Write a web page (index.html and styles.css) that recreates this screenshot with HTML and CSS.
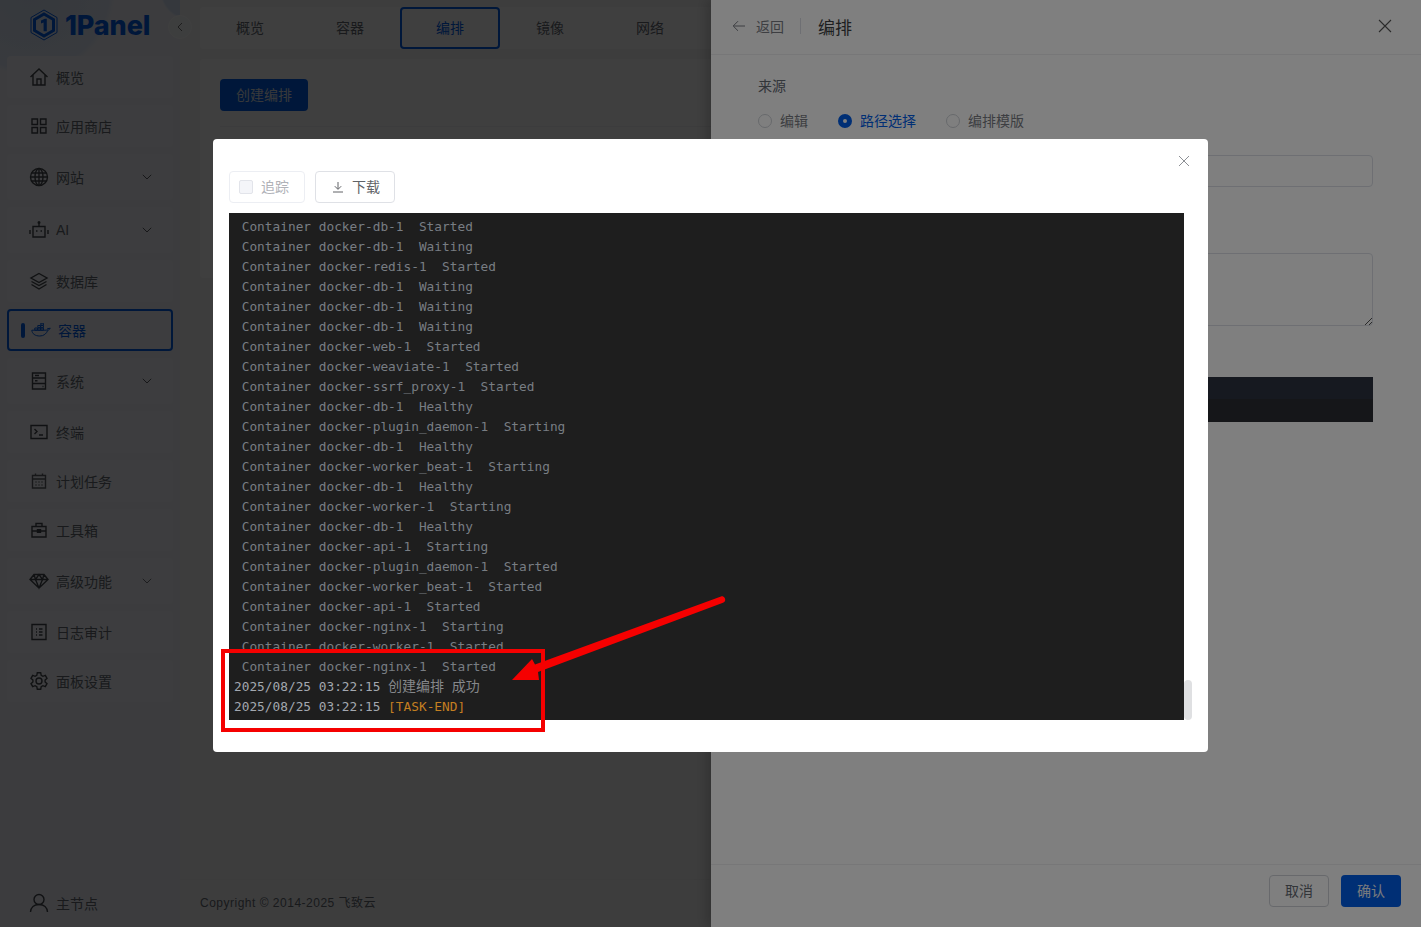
FILE: index.html
```html
<!DOCTYPE html>
<html lang="zh-CN">
<head>
<meta charset="utf-8">
<title>1Panel</title>
<link rel="stylesheet" href="styles.css">
</head>
<body>
<div class="page">
  <aside class="sidebar">
    <div class="logo">
      <svg class="logo-mark" viewBox="0 0 30 32"><path class="lm-outer" d="M15 1 28 8.500v15L15 31 2 23.500v-15z"/><path class="lm-inner" d="M15 5 24.500 10.500v11L15 27 5.500 21.500v-11z"/><path class="lm-one" d="M12 11.500 15.800 9.800h2v12.400h-3.200v-8.700l-2.600 1z"/></svg>
      <span class="logo-text">1Panel</span>
    </div>
    <nav class="menu">
      <a class="item"><svg class="ico" viewBox="0 0 20 20"><path d="M1.500 10 10 2l8.500 8M4 8v10h12V8M8 18v-6h4v6"/></svg><span>概览</span></a>
      <a class="item"><svg class="ico" viewBox="0 0 20 20"><path d="M3 3h5.500v5.500H3zM11.500 3H17v5.500h-5.500zM3 11.500h5.500V17H3zM11.500 11.500H17V17h-5.500z"/></svg><span>应用商店</span></a>
      <a class="item sub"><svg class="ico" viewBox="0 0 20 20"><circle cx="10" cy="10" r="8.500"/><ellipse cx="10" cy="10" rx="4" ry="8.500"/><path d="M10 1.500v17M1.500 10h17M2.700 6h14.600M2.700 14h14.600"/></svg><span>网站</span><svg class="chev" viewBox="0 0 10 6"><path d="M.8.800 5 5 9.200.8"/></svg></a>
      <a class="item sub"><svg class="ico" viewBox="0 0 20 20"><path d="M4 6.500h12V17H4zM10 6.500V3.500M1 10v4M19 10v4M7 11h1.500M11.500 11h1.500"/><circle cx="10" cy="2.500" r=".8"/></svg><span>AI</span><svg class="chev" viewBox="0 0 10 6"><path d="M.8.800 5 5 9.200.8"/></svg></a>
      <a class="item"><svg class="ico" viewBox="0 0 20 20"><path d="M10 2.500 18 7l-8 4.500L2 7zM2.500 10.500l7.500 4 7.500-4M2.500 13.500l7.500 4.500 7.500-4.500"/></svg><span>数据库</span></a>
      <a class="item active"><i class="bar"></i><svg class="ico docker" viewBox="0 0 20 14"><path d="M.8 7.200h14.400c.8 0 1.300-.8 1.500-1.800.9.300 1.800.2 2.500-.4-.3 1.100-1.100 2-2.400 2.200-1.200 3.500-4 5.800-8 5.800-4.700 0-7.700-2.200-8-5.800z"/><path d="M3.800 5h2.600v2.200H3.800zM6.800 5h2.600v2.200H6.800zM9.800 5h2.600v2.200H9.800zM6.800 2.500h2.600v2.200H6.800zM9.800 2.500h2.600v2.200H9.800zM9.800.2h2.600v2H9.800z"/></svg><span>容器</span></a>
      <a class="item sub"><svg class="ico" viewBox="0 0 20 20"><path d="M3.500 2h13v16h-13zM3.500 7h13M3.500 12.500h13M6 4.500h4M6 9.700h2.500M13.500 15.500h1"/></svg><span>系统</span><svg class="chev" viewBox="0 0 10 6"><path d="M.8.800 5 5 9.200.8"/></svg></a>
      <a class="item"><svg class="ico" viewBox="0 0 20 20"><path d="M2 3.500h16v13H2zM5.500 7l2.500 2.500L5.500 12M10 13h4"/></svg><span>终端</span></a>
      <a class="item"><svg class="ico faint" viewBox="0 0 20 20"><path d="M3.500 4.500h13V17h-13zM3.500 8h13M6.500 2.500v2M13.500 2.500v2M6.500 11h1M9.500 11h1M12.500 11h1M6.500 14h1M9.500 14h1M12.500 14h1"/></svg><span>计划任务</span></a>
      <a class="item"><svg class="ico" viewBox="0 0 20 20"><path d="M3 6.500h14V17H3zM7 6.500V3.500h6v3M3 11h14M8.500 9.700h3v2.500h-3z"/></svg><span>工具箱</span></a>
      <a class="item sub"><svg class="ico wide" viewBox="0 0 20 20"><path d="M5 3.500h10l4 5L10 17 1 8.500zM1 8.500h18M6.500 8.500 10 17l3.500-8.500M5 3.500l1.500 5L10 3.500l3.500 5 1.500-5"/></svg><span>高级功能</span><svg class="chev faint" viewBox="0 0 10 6"><path d="M.8.800 5 5 9.200.8"/></svg></a>
      <a class="item"><svg class="ico" viewBox="0 0 20 20"><path d="M3 2.500h14v15H3zM7 7h1M7 10h1M7 13h1M10 7h3.500M10 10h3.500M10 13h3.500"/></svg><span>日志审计</span></a>
      <a class="item"><svg class="ico" viewBox="0 0 20 20"><circle cx="10" cy="10" r="3"/><path d="M8.300 1.800h3.400l.5 2.500 1.700 1 2.400-.9 1.700 3-1.900 1.600v2l1.900 1.600-1.700 3-2.400-.9-1.700 1-.5 2.500H8.300l-.5-2.500-1.700-1-2.400.9-1.700-3L3.900 11V9L2 7.400l1.700-3 2.400.9 1.700-1z"/></svg><span>面板设置</span></a>
    </nav>
    <div class="node"><svg class="ico big" viewBox="0 0 20 20"><circle cx="10" cy="6.500" r="5"/><path d="M1.500 19c.3-4.500 3.500-7.500 8.500-7.500s8.200 3 8.500 7.500"/></svg><span>主节点</span></div>
  </aside>
  <button class="collapse"><svg viewBox="0 0 6 10"><path d="M5 1 1 5l4 4"/></svg></button>
  <main class="main">
    <div class="content">
      <div class="tabs">
        <a class="tab">概览</a><a class="tab">容器</a><a class="tab on">编排</a><a class="tab">镜像</a><a class="tab">网络</a>
      </div>
      <section class="card">
        <button class="primary create">创建编排</button>
        <div class="rule"></div>
      </section>
    </div>
    <footer class="copy">Copyright © 2014-2025 飞致云</footer>
  </main>
</div>
<div class="mask mask-page"></div>
<aside class="drawer">
  <header class="d-head">
    <svg class="back" viewBox="0 0 14 12"><path d="M13 6H1.500M6 1.200 1.200 6 6 10.800"/></svg>
    <span class="back-text">返回</span>
    <i class="d-sep"></i>
    <span class="d-title">编排</span>
    <svg class="d-close" viewBox="0 0 14 14"><path d="M1 1l12 12M13 1 1 13"/></svg>
  </header>
  <div class="d-body">
    <div class="label">来源</div>
    <div class="radios">
      <label class="radio"><i class="dot"></i>编辑</label>
      <label class="radio sel"><i class="dot"></i>路径选择</label>
      <label class="radio"><i class="dot"></i>编排模版</label>
    </div>
    <div class="input"></div>
    <div class="textarea"><svg viewBox="0 0 8 8"><path d="M1 8 8 1M5 8l3-3"/></svg></div>
    <div class="editor"><div class="ed-line"></div></div>
  </div>
  <footer class="d-foot">
    <button class="plain">取消</button>
    <button class="primary ok">确认</button>
  </footer>
</aside>
<div class="mask mask-top"></div>
<section class="dialog">
  <svg class="x" viewBox="0 0 12 12"><path d="M1 1l10 10M11 1 1 11"/></svg>
  <div class="tools">
    <label class="track"><i class="check"></i>追踪</label>
    <button class="down"><svg viewBox="0 0 12 12"><path d="M6 1v7M2.800 5.200 6 8.400l3.200-3.200M1 11h10"/></svg>下载</button>
  </div>
  <div class="log-wrap">
    <pre class="log"> Container docker-db-1  Started
 Container docker-db-1  Waiting
 Container docker-redis-1  Started
 Container docker-db-1  Waiting
 Container docker-db-1  Waiting
 Container docker-db-1  Waiting
 Container docker-web-1  Started
 Container docker-weaviate-1  Started
 Container docker-ssrf_proxy-1  Started
 Container docker-db-1  Healthy
 Container docker-plugin_daemon-1  Starting
 Container docker-db-1  Healthy
 Container docker-worker_beat-1  Starting
 Container docker-db-1  Healthy
 Container docker-worker-1  Starting
 Container docker-db-1  Healthy
 Container docker-api-1  Starting
 Container docker-plugin_daemon-1  Started
 Container docker-worker_beat-1  Started
 Container docker-api-1  Started
 Container docker-nginx-1  Starting
 Container docker-worker-1  Started
 Container docker-nginx-1  Started
<span class="date">2025/08/25 03:22:15</span> <span class="cjk">创建编排</span> <span class="cjk">成功</span>
<span class="date">2025/08/25 03:22:15</span> <span class="end">[TASK-END]</span></pre>
    <div class="track-bar"><i class="thumb"></i></div>
  </div>
</section>
<svg class="annot" viewBox="0 0 1421 927">
  <rect class="a-rect" x="223" y="651" width="320" height="79"/>
  <path class="a-arrow" d="M721 596.500C723.500 595.500 726 598.500 725 601C724.700 601.800 724 602.300 723 602.700L538 672 539 680 512 680 532 659 535 664.500z"/>
</svg>
</body>
</html>
```

FILE: styles.css
```css
* { box-sizing: border-box; }
html, body { margin: 0; height: 100%; overflow: hidden; }
body { font-family: "Liberation Sans", "Noto Sans CJK SC", sans-serif; font-size: 14px; color: #646a73; background: #f4f4f5; }
i { display: block; font-style: normal; }
button { font: inherit; cursor: pointer; }
svg path, svg circle, svg ellipse, svg rect { fill: none; stroke: currentColor; }

.page { display: flex; width: 1421px; height: 927px; position: relative; }

.sidebar { width: 180px; height: 927px; flex: none; display: flex; flex-direction: column; padding: 0 7px;
  background: radial-gradient(circle at 30px -10px, #d6e2f6 0, #e3eaf8 80px, transparent 85px), radial-gradient(circle at 190px -10px, #d6e2f6 0, #d6e2f6 28px, transparent 30px), #f0f3fb; }
.logo { height: 56px; display: flex; align-items: center; padding: 0 0 6px 22px; color: #005eeb; flex: none; }
.logo-mark { width: 30px; height: 32px; margin-right: 6px; flex: none; }
.lm-outer { stroke-width: 1; }
.lm-inner { stroke-width: 3; }
.lm-one { fill: currentColor; stroke: none; }
.logo-text { font-family: "Inter", sans-serif; font-size: 27px; font-weight: 800; letter-spacing: -.1px; }

.menu { display: flex; flex-direction: column; gap: 7px; }
.item { height: 42px; display: flex; align-items: center; padding: 0 0 0 22px; background: #f5f7fc; border-radius: 4px; position: relative; }
.item.sub { height: 46px; }
.ico { width: 20px; height: 20px; flex: none; margin-right: 7px; color: #43464c; stroke-width: 1.4; }
.ico.faint { color: #5c5f66; }
.chev { width: 10px; height: 6px; position: absolute; right: 21px; top: 20px; color: #5c5f66; stroke-width: 1; }
.chev.faint { color: #74777e; }
.item.active { border: 2px solid #005eeb; color: #005eeb; padding: 0 0 0 12px; }
.bar { width: 4px; height: 15px; border-radius: 2px; background: #005eeb; margin-right: 6px; }
.ico.docker { width: 20px; height: 14px; color: #005eeb; stroke-width: 1; }
.node { margin-top: auto; height: 48px; padding: 0 0 0 22px; display: flex; align-items: center; }
.ico.big { color: #43464c; }

.collapse { position: absolute; left: 168px; top: 15px; width: 24px; height: 24px; padding: 0; border-radius: 50%; border: 1px solid #fff; background: #f7f8fa; display: flex; align-items: center; justify-content: center; color: #777; z-index: 1; }
.collapse svg { width: 6px; height: 10px; stroke-width: 1; }

.main { flex: 1; min-width: 0; display: flex; flex-direction: column; background: #f6f6f6; }
.content { flex: 1; padding: 7px 20px 0; display: flex; flex-direction: column; gap: 10px; }
.tabs { height: 42px; display: flex; background: #fff; border-radius: 4px; flex: none; }
.tab { width: 100px; display: flex; align-items: center; justify-content: center; border-radius: 4px; padding-bottom: 2px; }
.tab.on { border: 2px solid #005eeb; color: #005eeb; padding-bottom: 2px; }
.card { height: 219px; background: #fff; border-radius: 4px; padding: 20px; }
.primary { background: #005eeb; color: #fff; border: 0; border-radius: 4px; padding: 0 0 2px; }
.create { display: block; width: 88px; height: 32px; color: #dfe3ea; }
.rule { height: 1px; background: #f3f3f5; margin-top: 15px; }
.copy { height: 48px; flex: none; border-top: 1px solid #f0f0f0; padding: 14px 20px 0; font-size: 12px; letter-spacing: .5px; line-height: 18px; }

.mask { position: absolute; left: 0; top: 0; width: 1421px; height: 927px; background: rgba(0, 0, 0, .5); z-index: 2; }
.mask-top { z-index: 4; }

.drawer { position: absolute; left: 711px; top: 0; width: 710px; height: 927px; background: #fff; display: flex; flex-direction: column; color: #646a73; box-shadow: -4px 0 12px rgba(0, 0, 0, .2); z-index: 3; }
.d-head { height: 55px; flex: none; display: flex; align-items: center; padding: 0 29px 2px 21px; border-bottom: 1px solid #eeeff1; }
.back { width: 14px; height: 12px; color: #7a7d84; stroke-width: 1; margin-right: 10px; }
.back-text { color: #7a7d84; }
.d-sep { width: 1px; height: 16px; background: #dcdfe6; margin: 0 17px 0 16px; }
.d-title { font-size: 17px; color: #3c3e42; }
.d-close { width: 14px; height: 14px; margin-left: auto; color: #555; stroke-width: 1.1; }
.d-body { flex: 1; padding: 22px 48px 0 47px; }
.label { line-height: 18px; margin-bottom: 16px; }
.radios { display: flex; gap: 30px; height: 20px; margin-bottom: 24px; }
.radio { display: flex; align-items: center; gap: 8px; color: #7a7d84; padding-bottom: 2px; }
.dot { width: 14px; height: 14px; border-radius: 50%; border: 1px solid #cfd2d8; background: #fff; margin-top: 2px; }
.radio.sel { color: #005eeb; }
.sel .dot { background: #fff; border: 5px solid #005eeb; }
.input { height: 32px; border: 1px solid #dcdfe6; border-radius: 4px; margin-bottom: 66px; }
.textarea { height: 73px; border: 1px solid #dcdfe6; border-radius: 4px; margin-bottom: 51px; display: flex; justify-content: flex-end; align-items: flex-end; color: #555; }
.textarea svg { width: 8px; height: 8px; stroke-width: 1; }
.editor { height: 45px; background: #2a2c32; }
.ed-line { height: 22px; background: #2c3240; }
.d-foot { height: 63px; flex: none; border-top: 1px solid #eeeff1; padding: 10px 20px 0 0; display: flex; justify-content: flex-end; align-items: flex-start; gap: 12px; }
.plain { width: 60px; height: 32px; background: #fff; border: 1px solid #d0d3d9; border-radius: 4px; color: #646a73; padding: 0 0 2px; }
.ok { width: 60px; height: 32px; color: #f2f5fa; }

.dialog { position: absolute; left: 213px; top: 139px; width: 995px; height: 613px; background: #fff; border-radius: 4px; padding: 32px 0 0 16px; z-index: 5; }
.x { position: absolute; right: 18px; top: 16px; width: 12px; height: 12px; color: #8d9095; stroke-width: 1; }
.tools { display: flex; gap: 10px; height: 32px; }
.track { width: 76px; border: 1px solid #eceef3; border-radius: 4px; display: flex; align-items: center; padding: 0 0 2px 9px; gap: 8px; color: #b0b2b8; }
.check { width: 14px; height: 14px; border: 1px solid #e2e4ea; background: #f4f5f9; border-radius: 2px; margin-top: 2px; }
.down { width: 80px; border: 1px solid #dfe1e6; background: #fff; border-radius: 4px; display: flex; align-items: center; justify-content: center; gap: 8px; color: #606266; padding: 0 0 2px 2px; }
.down svg { width: 12px; height: 12px; stroke-width: 1; margin-top: 2px; }
.log-wrap { display: flex; margin-top: 10px; height: 507px; }
.log { margin: 0; width: 955px; height: 507px; background: #1e1e1e; color: #787d83; overflow: hidden; padding: 4px 0 0 5px; font-family: "DejaVu Sans Mono", monospace; font-size: 12.8px; line-height: 20px; white-space: pre; }
.date { color: #a3a8b0; }
.cjk { font-family: "Noto Sans CJK SC", sans-serif; font-size: 14px; color: #85878a; line-height: 0; }
.end { color: #c47f21; }
.track-bar { width: 8px; display: flex; align-items: flex-end; }
.thumb { width: 8px; height: 40px; border-radius: 4px; background: #dfe0e2; }

.annot { position: absolute; left: 0; top: 0; width: 1421px; height: 927px; pointer-events: none; z-index: 6; }
.a-rect { stroke: #f50000; stroke-width: 4; }
svg .a-arrow { fill: #f50000; stroke: none; }
```
